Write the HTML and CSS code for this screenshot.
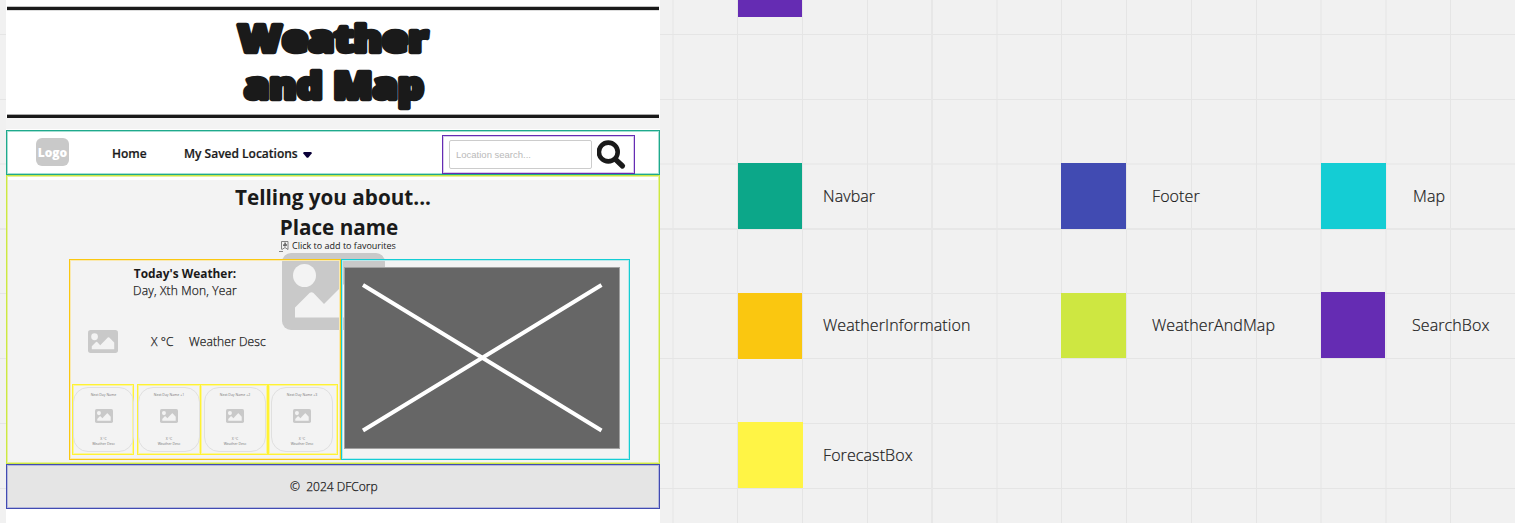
FILE: index.html
```html
<!DOCTYPE html>
<html lang="en">
<head>
<meta charset="utf-8">
<title>Weather and Map wireframe</title>
<link rel="stylesheet" href="styles.css">
</head>
<body>
<svg class="defs" width="0" height="0" aria-hidden="true">
  <symbol id="picture" viewBox="0 0 103 77" preserveAspectRatio="none">
    <rect width="103" height="77" rx="9" fill="#c9c9c9"/>
    <circle cx="22.500" cy="22.500" r="11.500" fill="#f3f3f3"/>
    <path d="M13 64.500V54.500L27.500 40Q29.500 38.500 31.500 40L42 51L68 25Q70.500 23 73 25L90 42V64.500Z" fill="#f3f3f3"/>
  </symbol>
</svg>
<div class="board">
  <svg class="grid-lines" width="1515" height="523" aria-hidden="true">
    <path d="M0 34.500H1515M0 99.500H1515M0 164H1515M0 293.500H1515M0 358.500H1515M0 423.500H1515M0 488.500H1515M673 0V523M737.500 0V523M802.500 0V523M867.500 0V523M997 0V523M1061.500 0V523M1126.500 0V523M1191.500 0V523M1256.500 0V523M1321 0V523M1386 0V523M1450.500 0V523" stroke="#e5e5e5" stroke-width="1" fill="none"/>
    <path d="M0 229H1515M932 0V523" stroke="#e7e7e7" stroke-width="2" fill="none"/>
  </svg>

  <main class="frame">
    <header class="banner">
      <svg class="banner-title" width="654" height="104" role="img">
        <text x="232" y="42" textLength="190" lengthAdjust="spacingAndGlyphs">Weather</text>
        <text x="238" y="89" textLength="180" lengthAdjust="spacingAndGlyphs">and Map</text>
      </svg>
    </header>
    <div class="gap-strip"></div>
    <nav class="navbar">
      <div class="logo">Logo</div>
      <div class="nav-item home">Home</div>
      <div class="nav-item saved"><span class="saved-text">My Saved Locations</span>
        <svg width="9" height="6" viewBox="0 0 9 6"><path d="M1.200 0H7.800Q9 .2 8.700 1.500L5.600 5.200Q4.500 6.400 3.400 5.200L.3 1.500Q0 .2 1.200 0Z" fill="#0a0038"/></svg>
      </div>
      <div class="search-box">
        <div class="search-input">Location search...</div>
        <svg width="30" height="30" viewBox="0 0 30 30"><circle cx="11.300" cy="12" r="9.400" fill="none" stroke="#1a1a1a" stroke-width="4.600"/><path d="M19 19.800L25.500 26" stroke="#1a1a1a" stroke-width="5.200" stroke-linecap="round"/></svg>
      </div>
    </nav>
    <section class="weather-map">
      <h1 class="telling">Telling you about...</h1>
      <h1 class="place">Place name</h1>
      <div class="favourite">
        <svg width="11" height="12" viewBox="0 0 11 12" fill="none" stroke="#666" stroke-width=".8"><path d="M2.500 9.500V1.500H9M9 1.500V9.500L6 7.500L3 9.500M0 11.500H4"/><path d="M6 2.500L7 4.500L8 5L6.500 6L5 6L4 5L5.500 4.500Z" fill="#666"/></svg>
        <span class="favourite-text">Click to add to favourites</span>
      </div>
      <div class="panels">
        <svg class="backdrop-picture" width="103" height="77"><use href="#picture"/></svg>
        <div class="info">
          <div class="today">Today's Weather:</div>
          <div class="date">Day, Xth Mon, Year</div>
          <div class="current">
            <svg width="30" height="23"><use href="#picture"/></svg>
            <span class="temp">X °C</span>
            <span class="desc">Weather Desc</span>
          </div>
          <div class="forecast">
            <div class="box first"><div class="card"><span>Next Day Name</span><svg width="18" height="14"><use href="#picture"/></svg><span class="deg">X °C</span><span>Weather Desc</span></div></div>
            <div class="box second"><div class="card"><span>Next Day Name +1</span><svg width="18" height="14"><use href="#picture"/></svg><span class="deg">X °C</span><span>Weather Desc</span></div></div>
            <div class="box third"><div class="card"><span>Next Day Name +2</span><svg width="18" height="14"><use href="#picture"/></svg><span class="deg">X °C</span><span>Weather Desc</span></div></div>
            <div class="box fourth"><div class="card"><span>Next Day Name +3</span><svg width="18" height="14"><use href="#picture"/></svg><span class="deg">X °C</span><span>Weather Desc</span></div></div>
          </div>
        </div>
        <div class="map">
          <svg width="276" height="182"><rect x=".5" y=".5" width="275" height="181" fill="#666" stroke="#a0a0a0"/><path d="M19 18L257.500 163.500M257.500 18L19 163.500" stroke="#fff" stroke-width="4"/></svg>
        </div>
      </div>
    </section>
    <footer class="footer"><span class="copy">©&nbsp; 2024 DFCorp</span></footer>
  </main>

  <aside class="legend">
    <div class="swatch purple cut"></div>
    <div class="legend-grid">
      <div class="entry"><i class="swatch teal"></i><span>Navbar</span></div>
      <div class="entry mid"><i class="swatch blue"></i><span>Footer</span></div>
      <div class="entry last"><i class="swatch cyan"></i><span>Map</span></div>
      <div class="entry second-row"><i class="swatch orange"></i><span>WeatherInformation</span></div>
      <div class="entry second-row mid"><i class="swatch lime"></i><span>WeatherAndMap</span></div>
      <div class="entry second-row last"><i class="swatch purple"></i><span>SearchBox</span></div>
      <div class="entry"><i class="swatch yellow"></i><span>ForecastBox</span></div>
    </div>
  </aside>
</div>
</body>
</html>
```
FILE: styles.css
```css
* { box-sizing: border-box; }
body { margin: 0; font-family: "Open Sans", sans-serif; color: #1a1a1a; background: #f1f1f1; }
svg { display: block; flex: none; }
.defs { position: absolute; }
.board { position: relative; display: flex; width: 1515px; height: 523px; overflow: hidden; }
.grid-lines { position: absolute; left: 0; top: 0; }

.frame { position: relative; width: 654px; height: 523px; margin-left: 6px; background: #fff; white-space: nowrap; }
.banner { margin: 7px 1px 0; height: 111px; border: solid #1a1a1a; border-width: 3px 0; box-shadow: 0 -1px #c4c4c4, inset 0 -1px #aaa, inset 0 1px #ddd; }
.banner-title { margin-left: -1px; }
.banner-title text { font: 800 37px "Open Sans", sans-serif; fill: #1a1a1a; stroke: #1a1a1a; stroke-width: 4.500px; stroke-linejoin: round; }
.gap-strip { height: 12px; background: #f3f3f3; border-bottom: 1px solid #fff; }

.navbar { display: grid; grid-template-columns: 76px 72px 258px 193px; padding-left: 29px; height: 45px; border: 1px solid #1fa98c; box-shadow: inset 0 0 0 1px #a5dfd3; }
.logo { width: 33px; height: 28px; margin-top: 7px; border-radius: 6px; background: #c9c9c9; color: #fff; font-size: 12px; font-weight: 800; line-height: 29px; text-align: center; }
.nav-item { font-size: 12px; font-weight: 600; line-height: 17px; padding-top: 14px; -webkit-text-stroke: .2px #1a1a1a; }
.saved { display: flex; gap: 5px; }
.saved-text { width: 114px; }
.saved svg { margin-top: 7px; }
.search-box { display: flex; gap: 5px; height: 39px; margin-top: 4px; padding: 4px 0 0 6px; border: 1px solid #652cb3; box-shadow: inset 0 0 0 1px #d9caec; }
.search-input { width: 143px; height: 29px; border: 1px solid #ccc; border-radius: 2px; padding-left: 6px; font: 9.500px/28px "Liberation Sans", sans-serif; color: #b9b9b9; }

.weather-map { height: 289px; border: 1px solid #cde842; box-shadow: inset 0 0 0 1px #e4f0a0; background: linear-gradient(#fff 4px, #f3f3f3 4px); text-align: center; }
.telling, .place { margin: 0; font-size: 20.700px; font-weight: 700; line-height: 30px; height: 30px; }
.telling { margin-top: 6px; }
.place { padding-left: 12px; }
.favourite { display: flex; height: 12px; margin: -2px 0 0 272px; font-size: 9px; line-height: 12px; gap: 2px; }
.panels { position: relative; display: flex; margin: 7px 0 0 62px; height: 201px; text-align: left; }
.backdrop-picture { position: absolute; left: 213px; top: -6px; }
.info { position: relative; width: 272px; border: 1px solid #fac710; box-shadow: inset 0 0 0 1px #fae9b0; padding-top: 5px; }
.today, .date { width: 230px; height: 17px; line-height: 17px; text-align: center; font-size: 11.900px; }
.today { font-weight: 700; }
.date, .current, .footer { font-weight: 300; -webkit-text-stroke: .25px #1a1a1a; }
.date { font-size: 12px; letter-spacing: .17px; }
.current { display: flex; height: 23px; margin: 31px 0 0 18px; font-size: 12px; letter-spacing: .1px; line-height: 24px; }
.temp { width: 38px; margin-left: 33px; }
.forecast { display: flex; height: 71px; margin: 31px 0 0 2px; }
.box { height: 71px; padding-top: 2px; border: 1px solid #fff233; box-shadow: inset 0 0 0 1px #fbf59c; }
.first { width: 62px; margin-right: 3px; }
.second { width: 64px; }
.third { width: 68px; margin-left: -1px; padding-left: 3px; }
.fourth { width: 70px; padding-left: 2px; }
.card { display: flex; flex-direction: column; align-items: center; width: 62px; height: 65px; padding-top: 4px; border: 1px solid #e0e0e0; border-radius: 15px; font-size: 3.500px; font-weight: 400; letter-spacing: 0; line-height: 5px; color: #777; -webkit-text-stroke: 0; }
.first .card { width: 61px; }
.card svg { margin-top: 12px; }
.card .deg { margin-top: 13px; }
.map { position: relative; width: 289px; padding: 7px 0 0 2px; border: 1px solid #14cdd4; box-shadow: inset 0 0 0 1px #b8eaec; }

.footer { height: 45px; border: 1px solid #414bb2; box-shadow: inset 0 0 0 1px #b5b8dc; background: #e5e5e5; padding-left: 283px; font-size: 12px; line-height: 43px; color: #111; }

.legend { position: relative; margin-left: 78px; width: 777px; font-size: 16px; }
.swatch { display: block; width: 64px; height: 66px; flex: none; }
.cut { height: 17px; }
.legend-grid { display: grid; grid-template-columns: 323px 260px 194px; grid-template-rows: 130px 129px 66px; margin-top: 146px; }
.entry { display: flex; gap: 21px; line-height: 66px; height: 66px; white-space: nowrap; color: #1a1a1a; font-weight: 300; letter-spacing: .1px; -webkit-text-stroke: .2px #1a1a1a; }
.second-row { line-height: 64px; }
.mid { gap: 26px; }
.last { gap: 27px; }
.mid .swatch, .last .cyan { width: 65px; }
.teal { background: #0ca789; }
.blue { background: #414bb2; }
.cyan { background: #14cdd4; }
.orange { background: #fac710; }
.lime { background: #cee741; height: 65px; }
.second-row .purple { margin-top: -1px; }
.purple { background: #652cb3; }
.yellow { background: #fff445; width: 65px; margin-right: -1px; }
```
